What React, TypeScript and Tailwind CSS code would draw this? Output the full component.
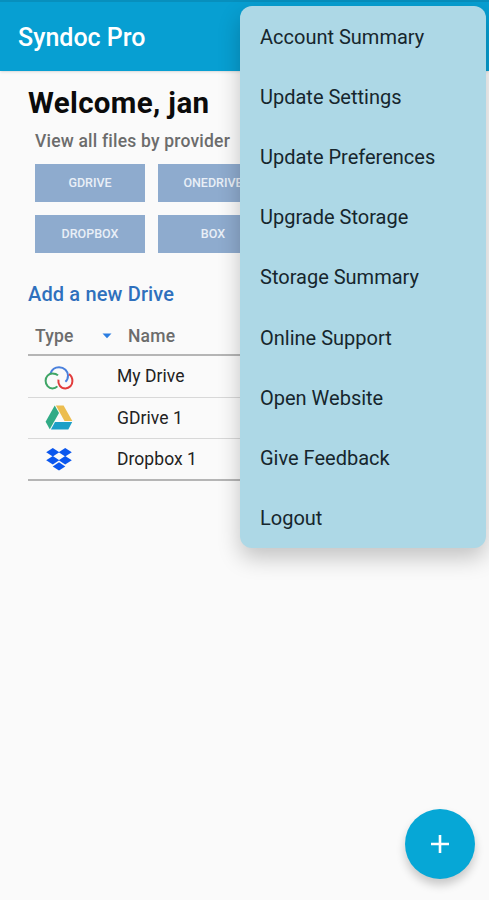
import React from 'react'

const menuItems = [
  'Account Summary',
  'Update Settings',
  'Update Preferences',
  'Upgrade Storage',
  'Storage Summary',
  'Online Support',
  'Open Website',
  'Give Feedback',
  'Logout',
]

const providers = ['GDRIVE', 'ONEDRIVE', 'DROPBOX', 'BOX']

const CloudIcon = () => (
  <svg className="mt-1" width="30" height="24" viewBox="0 0 30 24" fill="none" strokeWidth="2">
    <path d="M6.6 7.2C8 3.2 11.2 1.2 15 1.2C20.2 1.2 24 5 24 9.6C24 12.4 23.2 14.4 21.4 15.8" stroke="#4a80dc" />
    <path d="M14 9.4C12.6 8 10.6 7.5 8.4 7.5C4.6 7.5 1.6 10.8 1.6 14.8C1.6 19 4.6 22.4 8.4 22.4C10.4 22.4 12 21.8 13.4 20.4" stroke="#3fa566" />
    <path d="M14.4 13.6C13.8 18.4 16.6 22.4 21.4 22.4C25.4 22.4 28.4 19.2 28.4 15.2C28.4 12 27.2 9.6 25 8.2" stroke="#e23c3c" />
  </svg>
)

const GDriveIcon = () => (
  <svg width="28" height="25" viewBox="0 0 28 25">
    <path d="M9.7 .6L14 8 4.8 24.3 .6 16.8Z" fill="#31ab86" />
    <path d="M10.9 .4H18.6L27.3 15.9H19.5Z" fill="#ecbd4f" />
    <path d="M10 17H27.2L23.3 24.4H5.9Z" fill="#1c9fc7" />
  </svg>
)

const DropboxIcon = () => (
  <svg width="26" height="23" viewBox="0 0 26 23" fill="#0b57ee">
    <path d="M6.8 .1L13.3 4.3 6.8 8.5 .2 4.3Z" />
    <path d="M19.2 .1L25.8 4.3 19.2 8.5 12.7 4.3Z" />
    <path d="M6.8 8.1L13.3 12.3 6.8 16.5 .2 12.3Z" />
    <path d="M19.2 8.1L25.8 12.3 19.2 16.5 12.7 12.3Z" />
    <path d="M13 14.2L19.3 18.4 13 22.6 6.7 18.4Z" />
  </svg>
)

const drives = [
  { name: 'My Drive', icon: <CloudIcon /> },
  { name: 'GDrive 1', icon: <GDriveIcon /> },
  { name: 'Dropbox 1', icon: <DropboxIcon /> },
]

const App: React.FC = () => {
  return (
    <div className="relative h-[900px] w-[489px] overflow-hidden bg-[#fafafa] font-['Roboto',sans-serif]">
      <header className="flex h-[71px] items-center border-t-2 border-[#078fbd] bg-[#079fd2] pt-0.5 pl-[18px] shadow-sm">
        <h1 className="text-[25px] font-medium text-white">Syndoc Pro</h1>
      </header>

      <main className="pr-7 pl-[28px]">
        <h2 className="pt-[14px] text-[29.5px] leading-9 font-bold tracking-[0.35px] text-[#0b0b0b]">Welcome, jan</h2>
        <p className="mt-2 pl-[7px] text-[17.5px] leading-6 font-medium tracking-[0.2px] text-[#6c6c6c]">View all files by provider</p>
        <div className="mt-[11px] grid w-[235px] grid-cols-[110px_110px] gap-x-[13px] gap-y-[13px] pl-[7px]">
          {providers.map((name) => (
            <button key={name} className="h-[38px] bg-[#8eabce] text-[12.5px] font-medium text-[#e9eff7]">
              {name}
            </button>
          ))}
        </div>
        <a className="mt-[27px] block text-[20px] leading-7 font-medium tracking-[0.15px] text-[#2f70bd]">Add a new Drive</a>

        <div className="mt-[10px] border-b-2 border-[#b5b5b5]">
          <div className="flex h-[38px] items-center border-b-2 border-[#b5b5b5] pl-[7px] text-[17.5px] font-medium tracking-[0.2px] text-[#6c6c6c]">
            <span className="w-[67px]">Type</span>
            <svg className="mr-4" width="10" height="6" viewBox="0 0 10 6">
              <path d="M.5 .5H9.5L5 5.2Z" fill="#2a7de1" />
            </svg>
            <span>Name</span>
          </div>
          {drives.map((drive) => (
            <div key={drive.name} className="flex h-[41.5px] items-center border-b border-[#d8d8d8] last:h-10 last:border-b-0">
              <div className="flex w-[61px] justify-center">{drive.icon}</div>
              <span className="ml-7 text-[17.5px] tracking-[0.05px] text-[#222]">{drive.name}</span>
            </div>
          ))}
        </div>
      </main>

      <nav className="absolute top-[6px] left-[240px] w-[245.5px] rounded-xl bg-[#add8e6] pt-px shadow-[0_10px_22px_rgba(0,0,0,0.22)]">
        {menuItems.map((item) => (
          <div key={item} className="flex h-[60.1px] items-center pl-5 text-[20px] text-[#16262d]">
            {item}
          </div>
        ))}
      </nav>

      <button className="absolute top-[809px] left-[405px] flex size-[70px] items-center justify-center rounded-full bg-[#06a7d6] shadow-[0_6px_10px_rgba(0,0,0,0.2)]">
        <svg width="20" height="20" viewBox="0 0 20 20" stroke="#fff" strokeWidth="2.6">
          <path d="M10 1V19M1 10H19" />
        </svg>
      </button>
    </div>
  )
}

export default App
